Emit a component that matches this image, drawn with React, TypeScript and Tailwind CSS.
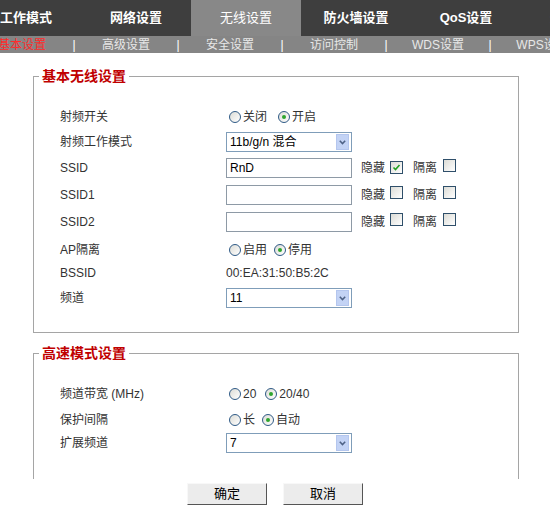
import React from "react";

const font = { fontFamily: '"Liberation Sans", "Noto Sans CJK SC", sans-serif' };

const tabs = ["工作模式", "网络设置", "无线设置", "防火墙设置", "QoS设置", "无线管理"];
const subTabs = ["基本设置", "高级设置", "安全设置", "访问控制", "WDS设置", "WPS设置"];

const Radio = ({ checked }: { checked?: boolean }) => (
  <span className="relative inline-block w-[12px] h-[12px] rounded-full border border-[#2f5a86] bg-gradient-to-br from-[#dcdcd6] to-white shrink-0">
    {checked && (
      <span className="absolute left-[3px] top-[3px] w-[4px] h-[4px] rounded-full bg-[#2ea52e]" />
    )}
  </span>
);

const Check = ({ checked }: { checked?: boolean }) => (
  <span className="relative inline-flex items-center justify-center w-[13px] h-[13px] border border-[#2f4f6a] bg-gradient-to-br from-[#dcdcd6] to-white shrink-0">
    {checked && (
      <svg width="9" height="9" viewBox="0 0 9 9">
        <path d="M1.5 4.5 L3.5 6.5 L7.5 2" fill="none" stroke="#21a121" strokeWidth="1.6" />
      </svg>
    )}
  </span>
);

const RadioGroup = ({ items, sel }: { items: { text: string; mr: string }[]; sel: number }) => (
  <div className="flex items-center pl-[3px] text-[12px] text-[#333]">
    {items.map((it, i) => (
      <span key={it.text} className={`flex items-center ${it.mr}`}>
        <Radio checked={i === sel} />
        <span className="ml-[2px]">{it.text}</span>
      </span>
    ))}
  </div>
);

const Select = ({ value }: { value: string }) => (
  <div className="relative flex items-center w-[126px] h-[20px] border border-[#7f9db9] bg-white text-[12px] text-black pl-[3px]">
    {value}
    <span className="absolute right-[2px] top-[1px] w-[13px] h-[16px] flex items-center justify-center bg-[#c3d3f5] border border-[#b4c6ee]">
      <svg width="7" height="5" viewBox="0 0 7 5">
        <path d="M0.8 0.8 L3.5 3.6 L6.2 0.8" fill="none" stroke="#4d6185" strokeWidth="1.5" />
      </svg>
    </span>
  </div>
);

const TextBox = ({ value }: { value?: string }) => (
  <div className="flex items-center w-[126px] h-[20px] border border-[#8e9aa6] bg-white text-[12px] text-black pl-[3px]">
    {value}
  </div>
);

const SsidExtra = ({ hidden }: { hidden?: boolean }) => (
  <div className="flex items-center text-[12px] text-[#333]">
    <span className="ml-[9px]">隐藏</span>
    <span className="ml-[5px]"><Check checked={hidden} /></span>
    <span className="ml-[10px]">隔离</span>
    <span className="ml-[6px]"><Check /></span>
  </div>
);

const Row = ({ h, label, children }: { h: string; label: string; children?: React.ReactNode }) => (
  <div className={`flex items-center ${h}`}>
    <div className="w-[192px] pl-[26px] text-[12px] text-[#333]">{label}</div>
    <div className="flex items-center">{children}</div>
  </div>
);

export default function App() {
  return (
    <div className="w-[550px] h-[526px] overflow-hidden bg-white" style={font}>
      <div className="h-[36px] bg-[#3e3e3e] flex ml-[-29px]">
        {tabs.map((t) => (
          <div
            key={t}
            className={`w-[110px] shrink-0 flex items-center justify-center text-[13px] text-white ${
              t === "无线设置" ? "bg-[#888888]" : "font-bold"
            }`}
          >
            {t}
          </div>
        ))}
      </div>
      <div className="h-[17px] bg-[#858585] flex items-center ml-[-21px] text-[12px] text-[#e8e8e8]">
        {subTabs.map((t, i) => (
          <React.Fragment key={t}>
            <div className={`w-[86px] shrink-0 text-center ${i === 0 ? "text-[#ff2a2a]" : ""}`}>{t}</div>
            <div className="w-[18px] shrink-0 text-center text-white">|</div>
          </React.Fragment>
        ))}
      </div>

      <div className="pl-[33px] w-[519px]">
        <fieldset className="mt-[15px] border border-[#a5a5a5] pb-[17px]">
          <legend className="ml-[5px] px-[3px] text-[14px] leading-[16px] font-bold text-[#c00000]">基本无线设置</legend>
          <div className="pt-[20px]">
            <Row h="h-[25px]" label="射频开关">
              <RadioGroup items={[{ text: "关闭", mr: "mr-[11px]" }, { text: "开启", mr: "" }]} sel={1} />
            </Row>
            <Row h="h-[26px]" label="射频工作模式">
              <Select value="11b/g/n 混合" />
            </Row>
            <Row h="h-[26px]" label="SSID">
              <TextBox value="RnD" />
              <SsidExtra hidden />
            </Row>
            <Row h="h-[28px]" label="SSID1">
              <TextBox />
              <SsidExtra />
            </Row>
            <Row h="h-[26px]" label="SSID2">
              <TextBox />
              <SsidExtra />
            </Row>
            <Row h="h-[30px]" label="AP隔离">
              <RadioGroup items={[{ text: "启用", mr: "mr-[7px]" }, { text: "停用", mr: "" }]} sel={1} />
            </Row>
            <Row h="h-[16px]" label="BSSID">
              <span className="text-[12px] text-[#333]">00:EA:31:50:B5:2C</span>
            </Row>
            <Row h="h-[34px]" label="频道">
              <Select value="11" />
            </Row>
          </div>
        </fieldset>

        <fieldset className="mt-[12px] border border-b-0 border-[#a5a5a5] h-[134px]">
          <legend className="ml-[5px] px-[3px] text-[14px] leading-[16px] font-bold text-[#c00000]">高速模式设置</legend>
          <div className="pt-[20px]">
            <Row h="h-[26px]" label="频道带宽 (MHz)">
              <RadioGroup items={[{ text: "20", mr: "mr-[9px]" }, { text: "20/40", mr: "" }]} sel={1} />
            </Row>
            <Row h="h-[25px]" label="保护间隔">
              <RadioGroup items={[{ text: "长", mr: "mr-[7px]" }, { text: "自动", mr: "" }]} sel={1} />
            </Row>
            <Row h="h-[22px]" label="扩展频道">
              <Select value="7" />
            </Row>
          </div>
        </fieldset>
      </div>

      <div className="flex gap-[16px] pl-[187px] mt-[4px]">
        {["确定", "取消"].map((b) => (
          <button
            key={b}
            className="w-[80px] h-[22px] bg-[#ececec] border border-t-[#f8f8f8] border-l-[#f8f8f8] border-r-[#555] border-b-[#555] text-[13px] text-black"
          >
            {b}
          </button>
        ))}
      </div>
    </div>
  );
}
